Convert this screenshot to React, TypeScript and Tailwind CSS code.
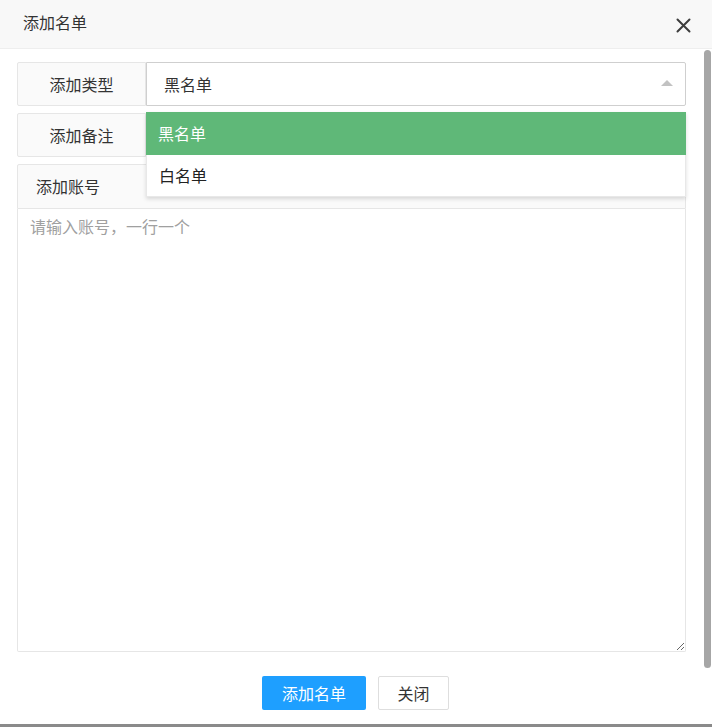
import React from "react";

const font = { fontFamily: '"Noto Sans CJK SC", "Noto Sans", sans-serif' };

function CloseIcon() {
  return (
    <svg width="15" height="15" viewBox="0 0 15 15" className="block">
      <path d="M1.5 1.5 L13.5 13.5 M13.5 1.5 L1.5 13.5" stroke="#3d3d3d" strokeWidth="2" strokeLinecap="round" />
    </svg>
  );
}

export default function App() {
  return (
    <div
      className="w-[712px] h-[727px] bg-white flex flex-col border-b-[3px] border-[#8a8a8a] text-[#333] overflow-hidden"
      style={font}
    >
      {/* Header */}
      <div className="h-[49px] shrink-0 bg-[#f8f8f8] border-b border-[#eeeeee] flex items-start justify-between">
        <div className="pl-[23px] pt-[12px] text-[16px] leading-[20px] text-[#333]">添加名单</div>
        <div className="pr-[21px] pt-[18px]">
          <CloseIcon />
        </div>
      </div>

      {/* Body */}
      <div className="h-[621px] shrink-0 flex">
        <div className="flex-1 pl-[17px] pr-[18px] pt-[13px] flex flex-col">
          {/* Row 1: type select */}
          <div className="flex h-[44px]">
            <div className="w-[129px] shrink-0 bg-[#fafafa] border border-[#e6e6e6] rounded-l-[2px] flex items-center justify-center text-[16px] pb-[1px]">
              添加类型
            </div>
            <div className="relative flex-1 z-10">
              <div className="h-full bg-white border border-[#cfcfcf] rounded-r-[2px] flex items-center justify-between pl-[17px] pr-[12px] text-[16px] pb-[1px]">
                <span>黑名单</span>
                <span className="w-0 h-0 border-l-[6px] border-r-[6px] border-b-[6px] border-l-transparent border-r-transparent border-b-[#c2c2c2] mb-[1px]"></span>
              </div>
              {/* Dropdown */}
              <div className="absolute left-0 right-0 top-[50px] bg-white shadow-[0_2px_4px_rgba(0,0,0,0.14)] text-[16px]">
                <div className="h-[43px] bg-[#5fb878] text-white flex items-center pl-[12px] pb-[2px]">黑名单</div>
                <div className="h-[42px] flex items-center pl-[12px] text-[#222] border-x border-b border-[#e8e8e8] pb-[2px]">白名单</div>
              </div>
            </div>
          </div>

          {/* Row 2: remark */}
          <div className="flex h-[44px] mt-[7px]">
            <div className="w-[129px] shrink-0 bg-[#fafafa] border border-[#e6e6e6] rounded-l-[2px] flex items-center justify-center text-[16px] pb-[1px]">
              添加备注
            </div>
            <div className="flex-1 bg-white border border-l-0 border-[#e6e6e6] rounded-r-[2px]"></div>
          </div>

          {/* Row 3: accounts */}
          <div className="mt-[7px] h-[45px] bg-[#fafafa] border border-[#e6e6e6] rounded-t-[2px] flex items-center pl-[18px] text-[16px] pb-[1px]">
            添加账号
          </div>
          <textarea
            className="h-[443px] w-full border border-t-0 border-[#e6e6e6] rounded-b-[2px] px-[12px] py-[7px] text-[16px] leading-[20px] outline-none placeholder:text-[#a0a0a0]"
            style={font}
            placeholder="请输入账号，一行一个"
          />
        </div>

        {/* Scrollbar */}
        <div className="w-[8px] shrink-0 pt-[1px] pr-[1px]">
          <div className="w-[7px] h-[618px] rounded-[4px] bg-[#a6a6a6]"></div>
        </div>
      </div>

      {/* Footer */}
      <div className="flex justify-center gap-[12px] pt-[6px] pr-[1px]">
        <button className="w-[104px] h-[34px] bg-[#1e9fff] text-white text-[16px] rounded-[2px]" style={font}>
          添加名单
        </button>
        <button className="w-[71px] h-[34px] bg-white border border-[#dedede] text-[#333] text-[16px] rounded-[2px]" style={font}>
          关闭
        </button>
      </div>
    </div>
  );
}
